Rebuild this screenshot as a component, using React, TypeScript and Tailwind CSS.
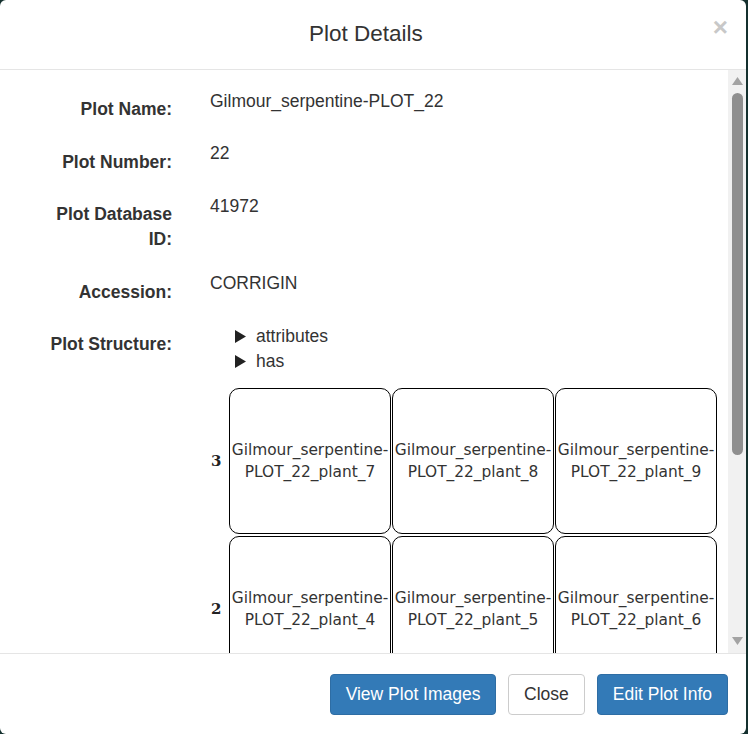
import React from 'react';

const fields = [
  { label: ['Plot Name:'], value: 'Gilmour_serpentine-PLOT_22' },
  { label: ['Plot Number:'], value: '22' },
  { label: ['Plot Database', 'ID:'], value: '41972' },
  { label: ['Accession:'], value: 'CORRIGIN' },
];

// rows visible in the scrolled view
const grid = [
  { row: 3, plants: [7, 8, 9] },
  { row: 2, plants: [4, 5, 6] },
];

const Triangle = ({ up }: { up?: boolean }) => (
  <svg width="11" height="8" viewBox="0 0 11 8">
    <path d={up ? 'M5.5 0 L11 8 L0 8 Z' : 'M0 0 L11 0 L5.5 8 Z'} fill="#a3a3a3" />
  </svg>
);

const App: React.FC = () => {
  return (
    <div className="h-[734px] w-[748px] overflow-hidden bg-[#14302e] font-['Liberation_Sans',Arial,sans-serif] text-[#333]">
      <div className="flex h-[734px] w-[746px] flex-col overflow-hidden rounded-[6px] bg-white">
        {/* Header */}
        <div className="flex h-[70px] shrink-0 items-start border-b border-[#e5e5e5] pl-[19px] pr-[18px]">
          <h4 className="flex-1 pt-[21px] text-center text-[22.5px] leading-[25px] text-[#333]">Plot Details</h4>
          <button className="mt-[14px] text-[26px] font-bold leading-[26px] text-[#c8c8c8]" aria-label="Close">
            ×
          </button>
        </div>

        {/* Body */}
        <div className="flex min-h-0 flex-1">
          <div className="min-w-0 flex-1 overflow-hidden pt-[19px]">
            <div className="grid grid-cols-[172px_1fr] gap-x-[38px] gap-y-[19.5px] text-[17.5px] leading-[25px]">
              {fields.map((f) => (
                <React.Fragment key={f.value}>
                  <div className="pt-[8px] text-right font-bold">
                    {f.label.map((l) => (
                      <div key={l}>{l}</div>
                    ))}
                  </div>
                  <div className="-mt-[0.5px]">{f.value}</div>
                </React.Fragment>
              ))}
              <div className="pt-[8px] text-right font-bold">Plot Structure:</div>
              <div>
                <div className="pl-[25px]">
                  {['attributes', 'has'].map((t) => (
                    <div key={t} className="flex items-center">
                      <svg width="11" height="13" viewBox="0 0 11 13" className="mr-[10px]">
                        <path d="M0 0 L11 6.5 L0 13 Z" fill="#222" />
                      </svg>
                      <span>{t}</span>
                    </div>
                  ))}
                </div>
                <div className="mt-[14px] flex flex-col gap-y-[2px]">
                  {grid.map((g) => (
                    <div key={g.row} className="flex gap-x-[1px]">
                      <div className="flex w-[18px] items-center pl-[1px] font-['DejaVu_Serif',serif] text-[15px] font-bold text-[#222]">
                        {g.row}
                      </div>
                      {g.plants.map((p) => (
                        <div
                          key={p}
                          className="flex h-[146px] w-[162px] flex-col items-center justify-center rounded-[10px] border border-black text-center font-['DejaVu_Sans',sans-serif] text-[15.4px] leading-[22px] text-[#333]"
                        >
                          <span>Gilmour_serpentine-</span>
                          <span>PLOT_22_plant_{p}</span>
                        </div>
                      ))}
                    </div>
                  ))}
                </div>
              </div>
            </div>
          </div>

          {/* Scrollbar */}
          <div className="flex w-[18px] shrink-0 flex-col items-center bg-[#f1f1f1]">
            <div className="flex h-[15px] items-end">
              <Triangle up />
            </div>
            <div className="mt-[8px] h-[362px] w-[11px] rounded-full bg-[#8f8f8f]" />
            <div className="flex-1" />
            <div className="flex h-[17px] items-start pt-[1px]">
              <Triangle />
            </div>
          </div>
        </div>

        {/* Footer */}
        <div className="flex h-[81px] shrink-0 items-center justify-end gap-x-[12px] border-t border-[#e5e5e5] pr-[18px]">
          <button className="h-[41px] rounded-[4px] border border-[#2e6da4] bg-[#337ab7] px-[14.5px] text-[17.5px] leading-[25px] text-white">
            View Plot Images
          </button>
          <button className="h-[41px] rounded-[4px] border border-[#ccc] bg-white px-[15px] text-[17.5px] leading-[25px] text-[#333]">
            Close
          </button>
          <button className="h-[41px] rounded-[4px] border border-[#2e6da4] bg-[#337ab7] px-[15px] text-[17.5px] leading-[25px] text-white">
            Edit Plot Info
          </button>
        </div>
      </div>
    </div>
  );
};

export default App;
